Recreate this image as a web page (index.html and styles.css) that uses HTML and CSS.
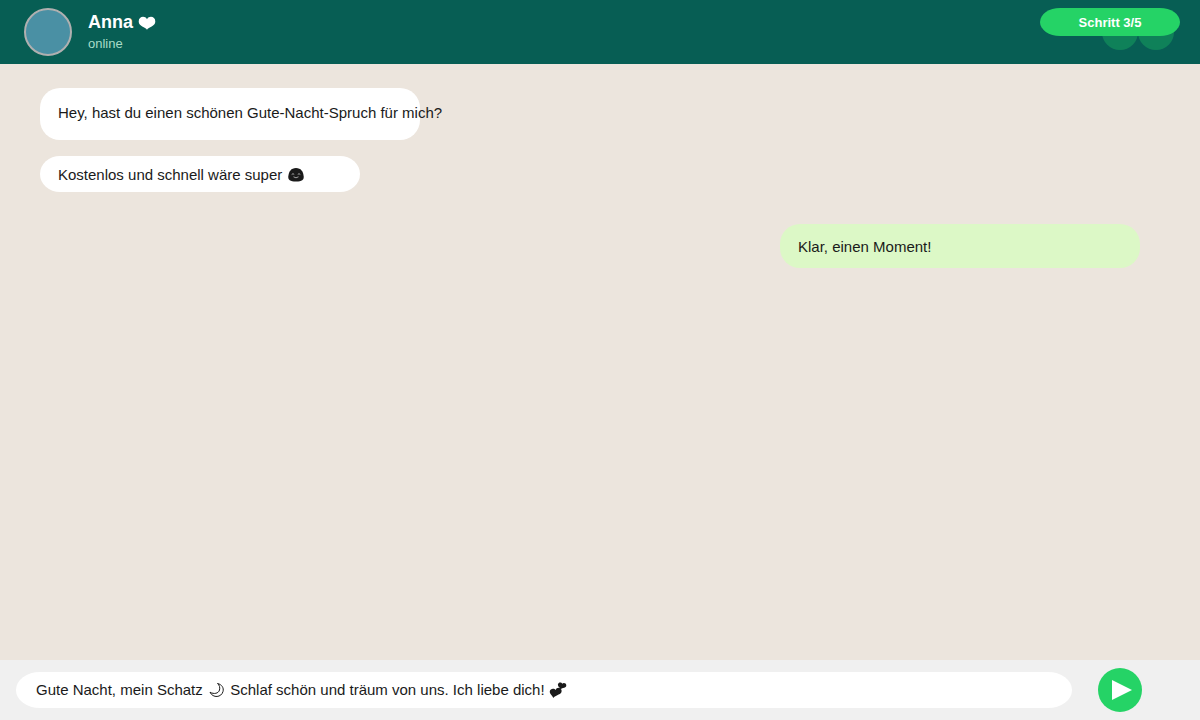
FILE: index.html
```html
<!DOCTYPE html>
<html lang="de">
<head>
<meta charset="utf-8">
<meta name="viewport" content="width=device-width, initial-scale=1">
<title>Anna – Chat</title>
<link rel="stylesheet" href="styles.css">
</head>
<body>
<div class="chat">
  <header class="topbar">
    <div class="avatar"></div>
    <div class="contact">
      <h1 class="name">Anna <svg class="heart" viewBox="0 0 18 16" aria-hidden="true"><path d="M9 14.800C7.500 12 .7 11.500 .7 6.500C.7 1.200 7 .4 9 4.300C11 .4 17.300 1.200 17.300 6.500C17.300 11.500 10.500 12 9 14.800Z"/></svg></h1>
      <p class="status">online</p>
    </div>
    <div class="actions">
      <button class="action" type="button" aria-label="Anrufen"></button>
      <button class="action" type="button" aria-label="Videoanruf"></button>
    </div>
    <div class="step">Schritt 3/5</div>
  </header>

  <main class="messages">
    <p class="bubble bubble-question">Hey, hast du einen schönen Gute-Nacht-Spruch für mich?</p>
    <p class="bubble bubble-short">Kostenlos und schnell wäre super <svg class="smile" viewBox="0 0 18 16" aria-hidden="true"><path d="M2.300 9.500C2.800 4.500 5 1 10 1S17.200 4.500 17.700 9.500C18 13 16 14.500 10 14.500S2 13 2.300 9.500Z"/><path class="smile-face" d="M5.700 7.500Q7 6 8.200 7.400M11.800 7.400Q13 6 14.300 7.500M7.500 9.800Q10 11.800 12.500 9.800"/></svg></p>
    <p class="bubble bubble-own">Klar, einen Moment!</p>
  </main>

  <form class="composer">
    <div class="field-wrap">
      <input class="field" type="text" aria-label="Nachricht" value="Gute Nacht, mein Schatz &emsp;&nbsp;&nbsp;Schlaf schön und träum von uns. Ich liebe dich!">
      <svg class="moon" viewBox="0 0 16 16" aria-hidden="true"><path d="M9.500 1.500C14 2.500 16 6 15 9.500C13.500 15.500 5 16.500 2 10.200C6 12.500 10.500 11.500 11.500 8C12.200 5.500 11.500 3.200 9.500 1.500Z"/></svg>
      <svg class="hearts" viewBox="0 0 18 16" aria-hidden="true"><path d="M4.200 15.900C3.800 13.500 .5 12.500 .8 9.300C1.200 6.300 5.200 5.900 6.800 8C7.200 5.200 12 4.700 12.600 8.600C13.100 12.800 7.500 12.600 4.200 15.900ZM11.600 7.200C11.400 5.600 8.700 4.900 8.900 2.500C9.300 -.1 12.500 -.1 13.300 1.800C14.300 .4 17.400 1 17.300 3.500C17.100 6.500 13.500 5.600 11.600 7.200Z"/></svg>
    </div>
    <button class="send" type="button" aria-label="Senden"><svg class="send-icon" viewBox="0 0 20 20" aria-hidden="true"><path d="M0 0L20 10L0 20Z"/></svg></button>
  </form>
</div>
</body>
</html>
```
FILE: styles.css
```css
* { box-sizing: border-box; }
body { margin: 0; font-family: "Liberation Sans", Arial, sans-serif; font-size: 15px; color: #1a1a1a; }
h1, p { margin: 0; }
button { border: 0; padding: 0; cursor: pointer; }
.chat { display: flex; flex-direction: column; min-height: 100vh; background: #ece5dd; }
.topbar { position: relative; display: flex; align-items: center; gap: 16px; height: 64px; padding: 0 26px 0 24px; background: #075e54; color: #fff; }
.avatar { width: 48px; height: 48px; border: 2px solid #b0b0b0; border-radius: 50%; background: #4a90a4; }
.contact { flex: 1; }
.name { font-size: 18px; line-height: 24px; }
.heart { width: 18px; height: 16px; vertical-align: -3px; fill: #fff; }
.status { font-size: 13px; line-height: 20px; color: #a8dcc8; }
.actions { display: flex; }
.action { width: 36px; height: 36px; border-radius: 50%; background: rgba(37, 211, 102, 0.3); }
.step { position: absolute; top: 8px; right: 20px; width: 140px; padding-top: 2px; border-radius: 20px / 14px; background: #25d366; font-size: 13px; font-weight: bold; line-height: 26px; text-align: center; }
.messages { flex: 1; display: flex; flex-direction: column; align-items: flex-start; padding: 24px 60px 24px 40px; }
.bubble { padding: 0 18px; border-radius: 20px; background: #fff; white-space: nowrap; line-height: 20px; }
.bubble-question { width: 380px; padding-top: 15px; padding-bottom: 17px; }
.bubble-short { width: 320px; margin-top: 16px; padding-top: 9px; padding-bottom: 7px; border-radius: 20px / 18px; }
.bubble-own { width: 360px; margin-top: 32px; padding-top: 13px; padding-bottom: 11px; align-self: flex-end; background: #dcf8c6; }
.smile { width: 18px; height: 16px; vertical-align: -3px; fill: #1a1a1a; }
.smile-face { fill: none; stroke: #fff; stroke-width: 0.6; }
.composer { display: flex; align-items: center; gap: 26px; height: 60px; padding: 0 58px 0 16px; background: #f0f0f0; }
.field-wrap { position: relative; flex: 1; min-width: 0; height: 36px; }
.field { width: 100%; height: 100%; padding: 0 20px 2px; border: 0; border-radius: 24px / 18px; background: #fff; color: inherit; font: inherit; }
.moon, .hearts { position: absolute; top: 10px; height: 16px; pointer-events: none; }
.moon { left: 192px; width: 16px; fill: none; stroke: #1a1a1a; stroke-width: 1; }
.hearts { left: 533px; width: 18px; fill: #1a1a1a; }
.send { display: grid; place-items: center; width: 44px; height: 44px; border-radius: 50%; background: #25d366; }
.send-icon { width: 20px; height: 20px; margin-left: 4px; fill: #fff; }
```
